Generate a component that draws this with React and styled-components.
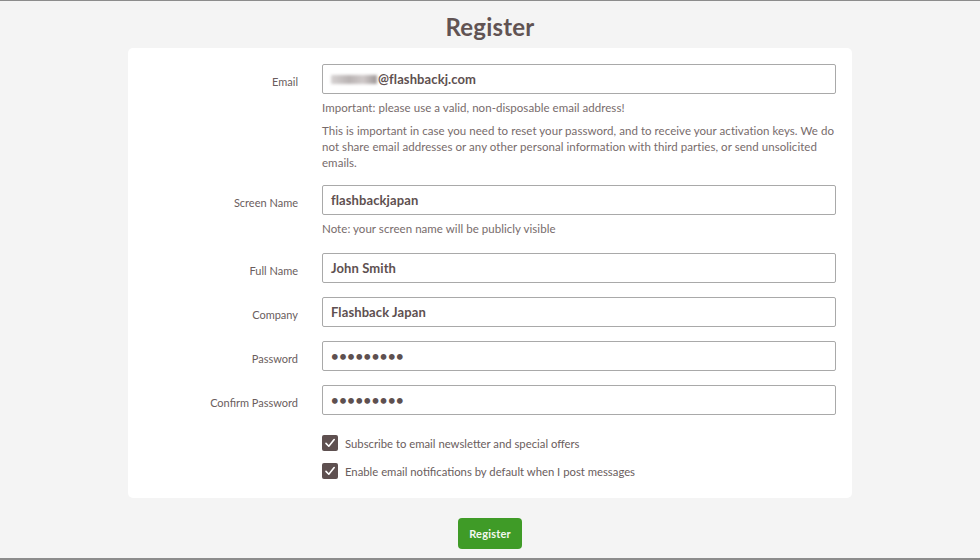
import React from 'react';
import styled, { createGlobalStyle } from 'styled-components';

const GlobalStyle = createGlobalStyle`
  html, body {
    margin: 0;
    padding: 0;
    background: #f4f4f4;
  }
  body {
    font-family: 'Lato', 'Liberation Sans', sans-serif;
    color: #5e5050;
  }
`;

const Page = styled.div`
  box-sizing: border-box;
  height: 560px;
  border-top: 1px solid #8c8c8c;
  border-bottom: 2px solid #8c8c8c;
  display: flex;
  flex-direction: column;
  align-items: center;
`;

const Title = styled.h1`
  margin: 10px 0 0;
  height: 37px;
  font-size: 24px;
  line-height: 32px;
  font-weight: 700;
  color: #615353;
  letter-spacing: 0.2px;
`;

const Card = styled.div`
  box-sizing: border-box;
  width: 724px;
  background: #fff;
  border-radius: 5px;
  padding: 16px 16px 17px 0;
  display: grid;
  grid-template-columns: 170px minmax(0, 1fr);
  column-gap: 24px;
  row-gap: 14px;
`;

const Label = styled.div`
  text-align: right;
  font-size: 11px;
  line-height: 24px;
  padding-top: 6px;
  color: #6a5d5d;
`;

const Control = styled.div`
  display: flex;
  flex-direction: column;
  min-width: 0;
  padding-bottom: ${p => p.$extra || 0}px;
`;

const Box = styled.div`
  box-sizing: border-box;
  height: 30px;
  border: 1px solid #a9a9a9;
  border-radius: 2px;
  padding: 0 8px;
  display: flex;
  align-items: center;
  font-size: 13px;
  font-weight: 700;
  color: #5e5050;
  letter-spacing: ${p => (p.$dots ? '0.6px' : '0.1px')};
`;

const Blur = styled.span`
  display: inline-block;
  width: 46px;
  height: 9px;
  margin-right: 1px;
  background: linear-gradient(90deg, #d6d2d2, #b9b3b3 40%, #cfc9c9 70%, #9d9696);
  filter: blur(1.5px);
`;

const Hint = styled.div`
  font-size: 11.5px;
  line-height: 16px;
  letter-spacing: 0.05px;
  white-space: nowrap;
  color: #776b6b;
  margin-top: ${p => p.$gap}px;
`;

const Checks = styled.div`
  grid-column: 2;
  display: flex;
  flex-direction: column;
  gap: 8px;
  margin-top: 4px;
`;

const CheckRow = styled.label`
  display: flex;
  align-items: center;
  gap: 7px;
  height: 20px;
  font-size: 11.3px;
  color: #6a5d5d;
`;

const CheckBox = styled.span`
  width: 16px;
  height: 16px;
  border-radius: 2px;
  background: #5e5050;
  display: flex;
  align-items: center;
  justify-content: center;
`;

const Button = styled.button`
  margin-top: 20px;
  width: 64px;
  height: 31px;
  border: none;
  border-radius: 4px;
  background: #3f9b27;
  color: #f3f8ef;
  font-family: inherit;
  font-size: 11px;
  font-weight: 700;
  letter-spacing: 0.2px;
`;

const Tick = () => (
  <svg width="12" height="12" viewBox="0 0 12 12">
    <path d="M2 6.4 L4.8 9.2 L10.2 2.6" fill="none" stroke="#fff" strokeWidth="1.6" strokeLinecap="round" strokeLinejoin="round" />
  </svg>
);

const fields = [
  { label: 'Full Name', value: 'John Smith' },
  { label: 'Company', value: 'Flashback Japan' },
  { label: 'Password', value: '•••••••••', dots: true },
  { label: 'Confirm Password', value: '•••••••••', dots: true },
];

export default function App() {
  return (
    <>
      <GlobalStyle />
      <Page>
        <Title>Register</Title>
        <Card>
          <Label>Email</Label>
          <Control>
            <Box><Blur />@flashbackj.com</Box>
            <Hint $gap={6}>Important: please use a valid, non-disposable email address!</Hint>
            <Hint $gap={7}>
              This is important in case you need to reset your password, and to receive your activation keys. We do
              <br />
              not share email addresses or any other personal information with third parties, or send unsolicited
              <br />
              emails.
            </Hint>
          </Control>

          <Label>Screen Name</Label>
          <Control $extra={2}>
            <Box>flashbackjapan</Box>
            <Hint $gap={6}>Note: your screen name will be publicly visible</Hint>
          </Control>

          {fields.map(f => (
            <React.Fragment key={f.label}>
              <Label>{f.label}</Label>
              <Control>
                <Box $dots={f.dots}>{f.value}</Box>
              </Control>
            </React.Fragment>
          ))}

          <Checks>
            <CheckRow><CheckBox><Tick /></CheckBox>Subscribe to email newsletter and special offers</CheckRow>
            <CheckRow><CheckBox><Tick /></CheckBox>Enable email notifications by default when I post messages</CheckRow>
          </Checks>
        </Card>
        <Button>Register</Button>
      </Page>
    </>
  );
}
